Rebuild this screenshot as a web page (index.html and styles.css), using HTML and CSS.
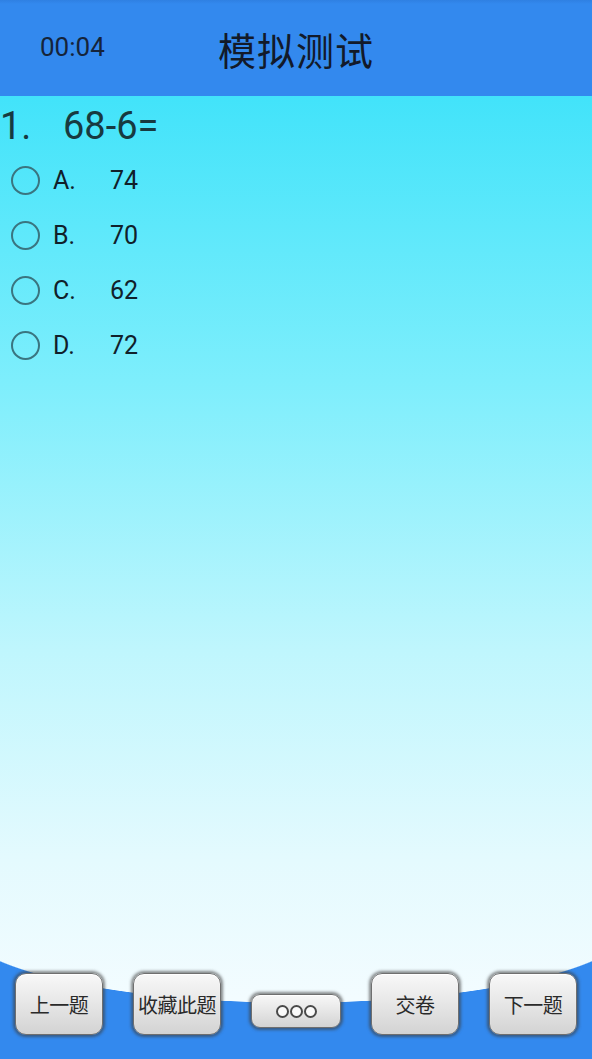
FILE: index.html
```html
<!DOCTYPE html>
<html lang="zh">
<head>
<meta charset="utf-8">
<title>模拟测试</title>
<link rel="stylesheet" href="styles.css">
</head>
<body>
<div class="page">
  <header class="topbar">
    <span class="timer">00:04</span>
    <h1 class="title">模拟测试</h1>
  </header>
  <main class="content">
    <div class="question"><span class="qnum">1.</span><span class="qtext">68-6=</span></div>
    <ul class="options">
      <li class="option"><span class="radio"></span><span class="letter">A.</span><span class="value">74</span></li>
      <li class="option"><span class="radio"></span><span class="letter">B.</span><span class="value">70</span></li>
      <li class="option"><span class="radio"></span><span class="letter">C.</span><span class="value">62</span></li>
      <li class="option"><span class="radio"></span><span class="letter">D.</span><span class="value">72</span></li>
    </ul>
  </main>
  <footer class="bottombar">
    <button class="btn">上一题</button>
    <button class="btn">收藏此题</button>
    <button class="btn btn-more"><span class="dot"></span><span class="dot"></span><span class="dot"></span></button>
    <button class="btn">交卷</button>
    <button class="btn">下一题</button>
  </footer>
</div>
</body>
</html>
```
FILE: styles.css
```css
* { box-sizing: border-box; }
html, body { margin: 0; padding: 0; }
body {
  width: 592px;
  height: 1059px;
  overflow: hidden;
  background: #3389ee;
  font-family: Roboto, "Noto Sans CJK SC", sans-serif;
}
.page {
  display: flex;
  flex-direction: column;
  height: 1059px;
  background:
    radial-gradient(340px 81px at 50% -37px, rgba(51, 137, 238, 0) 99.2%, #3389ee 100%) left bottom / 100% 100px no-repeat,
    linear-gradient(#42e3fa 96px, #7deefc 380px, #bff6fd 650px, #e4fafe 860px, #f3fcff 1000px);
}
.topbar {
  height: 96px;
  flex: none;
  background: linear-gradient(#2f80e2 0, #3389ee 4px, #3389ee 100%);
  display: flex;
  align-items: center;
  padding-left: 40px;
}
.timer {
  font-size: 26px;
  color: #15243a;
  width: 178px;
  margin-top: -2px;
}
.title {
  margin: 0;
  font-weight: normal;
  font-size: 38px;
  color: #121a2a;
  font-family: "Noto Sans CJK SC", sans-serif;
  letter-spacing: 1px;
  line-height: 1;
  margin-top: 2px;
}
.content {
  flex: 1;
  padding-top: 8px;
}
.question {
  font-size: 38px;
  color: #173a40;
  line-height: 44px;
  display: flex;
}
.qnum { width: 63px; }
.options {
  list-style: none;
  margin: 5px 0 0;
  padding: 0;
}
.option {
  height: 55px;
  display: flex;
  align-items: center;
  font-size: 25px;
  color: #10202a;
}
.radio {
  width: 29px;
  height: 29px;
  border: 2px solid #3a7580;
  border-radius: 50%;
  margin-left: 11px;
  margin-right: 13px;
}
.letter { width: 57px; }
.bottombar {
  display: flex;
  justify-content: space-between;
  align-items: flex-start;
  padding: 0 15px 24px;
}
.btn {
  width: 88px;
  height: 62px;
  border: 1px solid #6f6f6f;
  border-radius: 11px;
  background: linear-gradient(#f8f8f8 0%, #e8e8e8 45%, #d3d3d3 100%);
  box-shadow: 0 0 3px 2px rgba(60, 60, 60, 0.6), inset 0 1px 1px #fff;
  font-family: "Noto Sans CJK SC", sans-serif;
  font-size: 20px;
  color: #2a2a2a;
  padding: 0;
  display: flex;
  align-items: center;
  justify-content: center;
  letter-spacing: -0.5px;
}
.btn-more {
  width: 90px;
  height: 34px;
  margin-top: 21px;
  border-radius: 9px;
  gap: 1px;
}
.dot {
  width: 13px;
  height: 13px;
  border: 2px solid #4a4a4a;
  border-radius: 50%;
  background: #fafafa;
}
```
